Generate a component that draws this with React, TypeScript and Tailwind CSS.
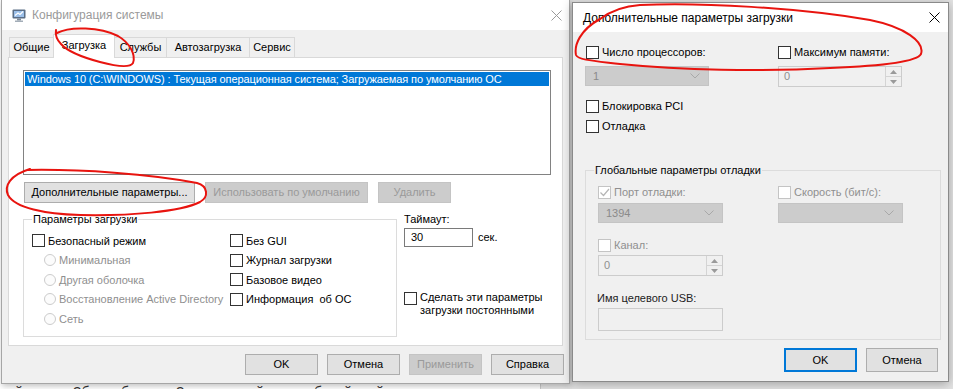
import clsx from "clsx";

// msconfig + "Дополнительные параметры загрузки" dialogs, with red hand-drawn marks

function CloseX({ className }: { className?: string }) {
  return (
    <svg className={className} width="11" height="11" viewBox="0 0 11 11" fill="none" stroke="currentColor" strokeWidth={1}>
      <path d="M0.5 0.5L10.5 10.5M10.5 0.5L0.5 10.5" />
    </svg>
  );
}

function MsconfigIcon() {
  return (
    <svg width="14" height="13" viewBox="0 0 14 13" className="shrink-0">
      <rect x="0.5" y="0.5" width="13" height="9" rx="1" fill="#5b6e86" />
      <rect x="2" y="2" width="10" height="6" fill="#9cc0ea" />
      <path d="M3 6.5L6 4L8 5.5L11 2.5" stroke="#ffffff" strokeWidth={1.2} fill="none" />
      <rect x="5" y="9.5" width="4" height="2" fill="#7d8a99" />
      <rect x="3" y="11.5" width="8" height="1.5" fill="#a3adb8" />
    </svg>
  );
}

function Check({ disabled, checked }: { disabled?: boolean; checked?: boolean }) {
  return (
    <span
      className={clsx(
        "w-[13px] h-[13px] shrink-0 border bg-white flex items-center justify-center",
        disabled ? "border-[#c4c4c4]" : "border-[#333333]"
      )}
    >
      {checked && (
        <svg width="11" height="11" viewBox="0 0 11 11" fill="none" stroke="#b5b5b5" strokeWidth={1.2}>
          <path d="M1.5 5.5L4.5 8.5L10 2" />
        </svg>
      )}
    </span>
  );
}

function Radio({ children }: { children: React.ReactNode }) {
  return (
    <div className="h-[19.5px] flex items-center gap-[3px] ml-[12px] text-[#8f8f8f]">
      <span className="w-[12px] h-[12px] rounded-full border border-[#cccccc] bg-[#fcfcfc] shrink-0" />
      <span>{children}</span>
    </div>
  );
}

function CheckRow({ children, disabled, checked, h = "h-[19.5px]" }: { children: React.ReactNode; disabled?: boolean; checked?: boolean; h?: string }) {
  return (
    <div className={clsx("flex items-center gap-[3px] whitespace-nowrap", h, disabled && "text-[#8f8f8f]")}>
      <Check disabled={disabled} checked={checked} />
      <span>{children}</span>
    </div>
  );
}

function Btn({
  children,
  w,
  h = "h-[21px]",
  disabled,
  primary,
}: {
  children: React.ReactNode;
  w: string;
  h?: string;
  disabled?: boolean;
  primary?: boolean;
}) {
  return (
    <div
      className={clsx(
        "flex items-center justify-center shrink-0 whitespace-nowrap",
        w,
        h,
        disabled
          ? "bg-[#cccccc] border border-[#c4c4c4] text-[#9a9a9a]"
          : primary
          ? "bg-[#e1e1e1] border-2 border-[#0078d7]"
          : "bg-[#e1e1e1] border border-[#adadad]"
      )}
    >
      {children}
    </div>
  );
}

function Combo({ value, w }: { value?: string; w: string }) {
  return (
    <div className={clsx("h-[20px] bg-[#cccccc] border border-[#c4c4c4] flex items-center pl-[7px] pr-[8px] text-[#8a8a8a]", w)}>
      <span>{value}</span>
      <svg className="ml-auto" width="10" height="6" viewBox="0 0 10 6" fill="none" stroke="#a8a8a8" strokeWidth={1}>
        <path d="M0.5 0.5L5 5L9.5 0.5" />
      </svg>
    </div>
  );
}

function Spin({ value, w }: { value: string; w: string }) {
  return (
    <div className={clsx("h-[21px] bg-[#f0f0f0] border border-[#cccccc] flex text-[#8f8f8f]", w)}>
      <span className="flex-1 flex items-center pl-[5px]">{value}</span>
      <div className="w-[16px] flex flex-col border-l border-[#d4d4d4]">
        <div className="flex-1 flex items-center justify-center border-b border-[#d4d4d4]">
          <svg width="7" height="4" viewBox="0 0 7 4">
            <path d="M0 4L3.5 0L7 4Z" fill="#9a9a9a" />
          </svg>
        </div>
        <div className="flex-1 flex items-center justify-center">
          <svg width="7" height="4" viewBox="0 0 7 4">
            <path d="M0 0L3.5 4L7 0Z" fill="#9a9a9a" />
          </svg>
        </div>
      </div>
    </div>
  );
}

const tabs = [
  { label: "Общие", w: "w-[45px]" },
  { label: "Загрузка", w: "w-[62px]", active: true },
  { label: "Службы", w: "w-[53px]" },
  { label: "Автозагрузка", w: "w-[84px]" },
  { label: "Сервис", w: "w-[46px]" },
];

// tops of the page text that peeks out under the dialogs
const stubs = [
  { t: "й", w: "w-[58px]" },
  { t: "Зб", w: "w-[48px]" },
  { t: "б", w: "w-[55px]" },
  { t: "З", w: "w-[80px]" },
  { t: "й", w: "w-[58px]" },
  { t: "б", w: "w-[30px]" },
  { t: "й", w: "w-[32px]" },
  { t: "й", w: "w-[20px]" },
];

function MsconfigDialog() {
  return (
    <div className="absolute left-[1px] top-[-1px] w-[569px] h-[385px] flex flex-col border border-[#a6a6a6] bg-[#f0f0f0] shadow-[1px_2px_6px_rgba(0,0,0,0.25)]">
      {/* Title bar (inactive) */}
      <div className="h-[30px] shrink-0 bg-white flex items-center pl-[10px] pr-[7px]">
        <MsconfigIcon />
        <span className="ml-[6px] text-[12px] text-[#9a9a9a]">Конфигурация системы</span>
        <CloseX className="ml-auto text-[#9a9a9a]" />
      </div>

      {/* Tabs */}
      <div className="h-[27px] shrink-0 flex items-end pl-[8px]">
        {tabs.map((t) =>
          t.active ? (
            <div
              key={t.label}
              className={clsx(
                "relative z-10 -ml-px -mb-px h-[24px] bg-white border border-b-0 border-[#d9d9d9] flex items-center justify-center pb-[2px]",
                t.w
              )}
            >
              {t.label}
            </div>
          ) : (
            <div
              key={t.label}
              className={clsx(
                "-ml-px h-[20px] bg-[#f0f0f0] border border-b-0 border-[#d9d9d9] flex items-center justify-center",
                t.w
              )}
            >
              {t.label}
            </div>
          )
        )}
      </div>

      {/* Tab panel */}
      <div className="mx-[6px] h-[289px] shrink-0 bg-white border border-[#d9d9d9] pt-[12px] pl-[14px] flex flex-col">
        <div className="w-[528px] h-[105px] border border-[#828282] p-px">
          <div className="h-[14px] bg-[#0078d7] text-white pl-[2px] leading-[14px] whitespace-nowrap tracking-[-0.1px]">
            Windows 10 (C:\WINDOWS) : Текущая операционная система; Загружаемая по умолчанию ОС
          </div>
        </div>

        <div className="mt-[7px] pl-px flex gap-[10px]">
          <Btn w="w-[171px]">Дополнительные параметры...</Btn>
          <Btn w="w-[163px]" disabled>
            Использовать по умолчанию
          </Btn>
          <Btn w="w-[73px]" disabled>
            Удалить
          </Btn>
        </div>

        <div className="mt-[9px] flex items-start">
          {/* Boot options group */}
          <div className="mt-[7px] relative w-[374px] h-[118px] border border-[#dcdcdc] pt-[11px] pl-[8px] flex">
            <span className="absolute -top-[8px] left-[8px] bg-white px-px leading-[14px]">Параметры загрузки</span>
            <div className="w-[198px] flex flex-col">
              <CheckRow>Безопасный режим</CheckRow>
              <Radio>Минимальная</Radio>
              <Radio>Другая оболочка</Radio>
              <Radio>Восстановление Active Directory</Radio>
              <Radio>Сеть</Radio>
            </div>
            <div className="flex flex-col">
              <CheckRow>Без GUI</CheckRow>
              <CheckRow>Журнал загрузки</CheckRow>
              <CheckRow>Базовое видео</CheckRow>
              <CheckRow>Информация&nbsp; об ОС</CheckRow>
            </div>
          </div>

          {/* Timeout */}
          <div className="ml-[7px] flex flex-col">
            <span className="leading-[14px]">Таймаут:</span>
            <div className="mt-[2px] flex items-center">
              <div className="w-[69px] h-[19px] border border-[#7a7a7a] bg-white flex items-center pl-[6px]">30</div>
              <span className="ml-[5px]">сек.</span>
            </div>
            <div className="mt-[44px] flex items-start gap-[3px]">
              <span className="mt-px">
                <Check />
              </span>
              <span className="leading-[13px]">
                Сделать эти параметры
                <br />
                загрузки постоянными
              </span>
            </div>
          </div>
        </div>
      </div>

      {/* Dialog buttons */}
      <div className="mt-[8px] pr-[5px] flex justify-end gap-[9px]">
        <Btn w="w-[73px]">OK</Btn>
        <Btn w="w-[73px]">Отмена</Btn>
        <Btn w="w-[73px]" disabled>
          Применить
        </Btn>
        <Btn w="w-[73px]">Справка</Btn>
      </div>
    </div>
  );
}

function AdvancedDialog() {
  return (
    <div className="absolute left-[572px] top-[2px] w-[377px] h-[380px] flex flex-col border border-[#8a8a8a] bg-[#f0f0f0] shadow-[0_2px_10px_rgba(0,0,0,0.3)]">
      <div className="h-[29px] shrink-0 bg-white flex items-center pl-[10px] pr-[8px]">
        <span className="text-[12px] pt-px">Дополнительные параметры загрузки</span>
        <CloseX className="ml-auto text-black" />
      </div>

      <div className="px-[12px] flex flex-col">
        <div className="mt-[10px] flex">
          <div className="w-[193px] pl-px">
            <CheckRow h="h-[20px]">Число процессоров:</CheckRow>
          </div>
          <CheckRow h="h-[20px]">Максимум памяти:</CheckRow>
        </div>
        <div className="mt-[4px] flex">
          <div className="w-[193px]">
            <Combo value="1" w="w-[124px]" />
          </div>
          <Spin value="0" w="w-[124px]" />
        </div>
        <div className="mt-[9px] pl-px">
          <CheckRow h="h-[20px]">Блокировка PCI</CheckRow>
          <CheckRow h="h-[20px]">Отладка</CheckRow>
        </div>

        {/* Global debug settings */}
        <div className="mt-[34px] relative w-[356px] h-[170px] border border-[#dcdcdc] pt-[11px] pl-[12px] flex flex-col">
          <span className="absolute -top-[8px] left-[8px] bg-[#f0f0f0] px-px leading-[14px]">
            Глобальные параметры отладки
          </span>
          <div className="flex">
            <div className="w-[180px]">
              <CheckRow h="h-[20px]" disabled checked>
                Порт отладки:
              </CheckRow>
            </div>
            <CheckRow h="h-[20px]" disabled>
              Скорость (бит/с):
            </CheckRow>
          </div>
          <div className="mt-px flex">
            <div className="w-[180px]">
              <Combo value="1394" w="w-[125px]" />
            </div>
            <Combo w="w-[125px]" />
          </div>
          <div className="mt-[13px]">
            <CheckRow h="h-[18px]" disabled>
              Канал:
            </CheckRow>
          </div>
          <div className="mt-px">
            <Spin value="0" w="w-[125px]" />
          </div>
          <span className="mt-[14px] -ml-px leading-[16px] text-[#222]">Имя целевого USB:</span>
          <div className="mt-[2px] w-[125px] h-[23px] bg-[#f0f0f0] border border-[#cccccc]" />
        </div>

        <div className="mt-[8px] -mr-[2px] flex justify-end gap-[9px]">
          <Btn w="w-[73px]" h="h-[24px]" primary>
            OK
          </Btn>
          <Btn w="w-[72px]" h="h-[24px]">
            Отмена
          </Btn>
        </div>
      </div>
    </div>
  );
}

function RedMarks() {
  return (
    <svg className="absolute inset-0 pointer-events-none z-20" width="953" height="389" viewBox="0 0 953 389" fill="none" stroke="#e8140f" strokeWidth={2} strokeLinecap="round">
      <path d="M57 33C70 26 100 27 118 36C130 43 136 55 133 63C130 68 115 66 100 62C85 58 68 52 61 44C57 40 55 36 56 30" />
      <path d="M27 170C80 169 150 174 197 183C208 186 209 197 200 202C180 212 130 216 80 215C45 214 15 208 8 195C4 186 10 175 30 169" />
      <path d="M600 19C612 10 625 6 640 5C700 2 800 8 870 20C905 27 925 42 921 54C917 62 880 66 830 68C760 72 680 70 620 64C595 61 578 60 576 55C574 45 580 30 600 19" />
    </svg>
  );
}

export default function App() {
  return (
    <div className="relative w-[953px] h-[389px] overflow-hidden bg-white text-[11px] text-black font-['Liberation_Sans',Arial,sans-serif]">
      {/* page text peeking out below the dialogs */}
      <div className="absolute left-[15px] top-[385px] flex text-[14px] leading-none text-[#333]">
        {stubs.map((s, i) => (
          <span key={i} className={s.w}>
            {s.t}
          </span>
        ))}
      </div>
      {/* window behind the right dialog */}
      <div className="absolute left-[540px] top-0 w-[413px] h-[389px] bg-[#e4e4e4] border-l border-[#c8c8c8]" />
      <MsconfigDialog />
      <AdvancedDialog />
      <RedMarks />
    </div>
  );
}
